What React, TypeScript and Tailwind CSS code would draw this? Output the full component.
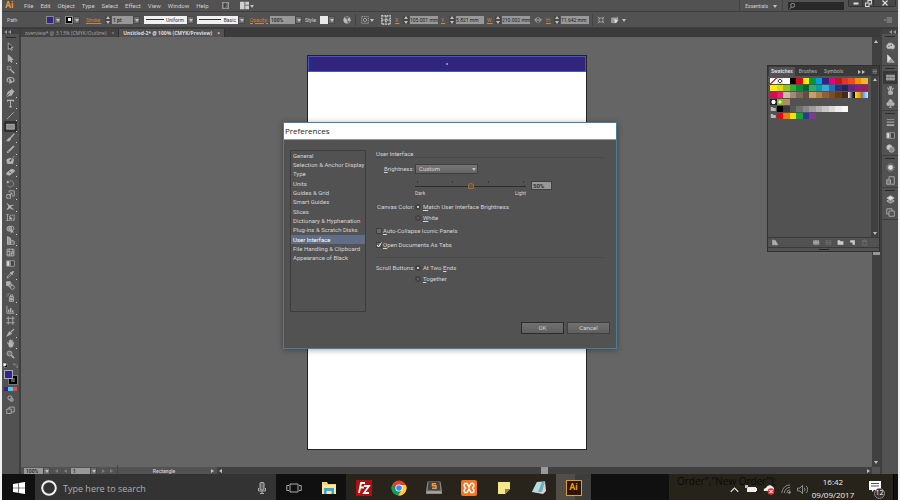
import React, { type ReactNode } from 'react';

const UI = "font-['Roboto','Liberation_Sans',sans-serif]";
const SEGOE = "font-['Open_Sans','Noto_Sans',sans-serif]";

function Icon({ children, className = 'size-[9px]' }: { children: ReactNode; className?: string }) {
  return (
    <svg viewBox="0 0 12 12" className={`shrink-0 ${className}`} fill="none" stroke="#b4b4b4" strokeWidth="1.1" aria-hidden="true">
      {children}
    </svg>
  );
}

const F = '#b4b4b4';

const selection = <path d="M3 1v9l2.3-2 1.6 3.2 1.3-.7L6.700 7.500H9.500z" fill="#2b2b2b" />;
const direct = <path d="M3 1v9l2.3-2 1.600 3.200 1.300-.7L6.700 7.500H9.500z" fill={F} />;
const wand = <><path d="M5.500 5.500L11 11" strokeWidth="1.800" /><path d="M4 .8v2M4 5.500v2M.8 4h2M5.500 4h2M1.700 1.700l1.200 1.200M6.300 1.700L5.200 2.800M1.700 6.300l1.200-1.200" /></>;
const lasso = <><path d="M3.500 8C0 7 .8 2 6 2s6.300 4.500 2.500 6" strokeWidth="1.500" /><path d="M5 3.500V10l1.500-1.500 1.500.3z" fill={F} /></>;
const pen = <><path d="M1 11l2-6 4-2 2.500 2.500-2 4z" fill={F} /><path d="M7 1.500L10.800 5.300" strokeWidth="1.800" /><path d="M1 11l4-4" stroke="#444" /></>;
const typeTool = <path d="M2 3.800V1.800h8v2M6 1.800v8.700M4.200 10.500h3.600" strokeWidth="1.400" />;
const line = <path d="M1.500 10.500l9-9" />;
const rect = <rect x="1" y="3" width="10" height="6.500" fill="#8c8c8c" />;
const brush = <><path d="M11 1L5.500 7" strokeWidth="1.600" /><path d="M5.800 6.500C3 6 3 9.500.8 10c2.200 1.300 6 .6 5-3.500z" fill={F} /></>;
const pencil = <><path d="M10.500 1.500L3.500 8.500" strokeWidth="2.400" /><path d="M1 11l1-3.500L4.500 10z" fill={F} stroke="none" /></>;
const blob = <><path d="M1 5l4-2 5 1-1 6H2z" fill={F} /><path d="M10.500 1L5 7" stroke="#444" strokeWidth="1.600" /><path d="M11.300 0L7 5" /></>;
const eraser = <><path d="M1 8l6-5 4 1v2L5 11l-4-1z" fill={F} /><path d="M4 6l3 2" stroke="#555" /></>;
const rotate = <><path d="M3 3.500a4.200 4.200 0 1 1-1 4.500" strokeDasharray="1.800 .8" /><path d="M1 2v4l4-1.800z" fill={F} stroke="none" /></>;
const scale = <><path d="M1 6h5v5H1zM4 3.500V1h7v7H8" /><path d="M4 8l4-4M5.500 4H8v2.500" /></>;
const width = <><path d="M1 2c3 1 3 6 9 8M1 10c3-1 5-6 9-6" strokeWidth="1.500" /><path d="M3 4.500h4v4H3z" fill={F} stroke="none" /></>;
const free = <><path d="M2 2v8M.5 2h3M.5 10h3" /><path d="M5 3h6v6.500H5z" strokeDasharray="1.500 1" strokeWidth="1.500" /><path d="M5 5l4 2-4 2z" fill={F} stroke="none" /></>;
const shape = <><circle cx="4.500" cy="5" r="3.300" fill="#888" /><circle cx="7.500" cy="4.500" r="3" /><path d="M6 5l5 5-3-.4L6.500 12z" fill={F} stroke="none" /></>;
const perspective = <><path d="M2 1v10M2 1l4 2v8M6 5l5 2v4H2M2 5h4M2 8h8" /><path d="M2 1l4 2v8H2z" fill="#999" /></>;
const mesh = <><path d="M1.500 1.500h9v9h-9z" /><path d="M1 5c3-2 6 2 10 0M1 8c4 2 6-2 10 0M4.500 1c-2 4 2 6 0 10M8 1c2 4-2 6 0 10" /></>;
const gradient = <><path d="M1 2.500h10v7H1z" /><path d="M6 3h4.500v6H6z" fill="#444" stroke="none" /><path d="M1.500 3h3v6h-3z" fill="#ddd" stroke="none" /><path d="M4.500 3h2v6h-2z" fill="#999" stroke="none" /></>;
const dropper = <><path d="M1.200 10.800l1-2.500 4-4 1.500 1.500-4 4z" /><path d="M6 3l3 3M7.500 4.500l2.500-2.800" strokeWidth="2.200" /></>;
const blend = <><rect x=".8" y="1" width="5" height="5" fill={F} /><circle cx="6" cy="6" r="2.500" fill="#888" /><circle cx="8.500" cy="8.500" r="2.600" fill="#515151" /></>;
const spray = <><path d="M4.500 5h5.500v6.500H4.500zM6 2.500h3V5H6z" /><path d="M6 7h2.500v2.500H6z" fill={F} /><path d="M1 1.500h1M3 2.500h1M1 4h1M3.500 .8h1" /></>;
const graph = <><path d="M1.200 1v10h10" /><path d="M3.700 10V6M6.300 10V4M9 10V7" strokeWidth="1.800" /></>;
const artboard = <path d="M3 .5v11M9 .5v11M.5 3h11M.5 9h11" />;
const slice = <><path d="M10.500 1.500L6 6" strokeWidth="1.500" /><path d="M1 11l3.500-6 3 2.500z" fill={F} /></>;
const hand = <path d="M3 7L1.500 5l1-.5L4 6V2h1.200v3L5.600 1h1.200l.2 4 .6-3.500h1.200L8.500 6l1-2h1L9.500 9 8 11H4.500z" fill={F} strokeWidth=".5" />;
const zoom = <><circle cx="4.700" cy="4.700" r="3.300" fill="#777" /><path d="M7.200 7.200L11 11" strokeWidth="2" /></>;

const toolGroups: [string, ReactNode][][] = [
  [['Selection', selection]],
  [['Direct Selection', direct], ['Magic Wand', wand], ['Lasso', lasso]],
  [['Pen', pen], ['Type', typeTool]],
  [['Line Segment', line], ['Rectangle', rect], ['Paintbrush', brush]],
  [['Pencil', pencil], ['Blob Brush', blob], ['Eraser', eraser]],
  [['Rotate', rotate], ['Scale', scale]],
  [['Width', width], ['Free Transform', free]],
  [['Shape Builder', shape], ['Perspective Grid', perspective]],
  [['Mesh', mesh], ['Gradient', gradient], ['Eyedropper', dropper], ['Blend', blend]],
  [['Symbol Sprayer', spray]],
  [['Column Graph', graph], ['Artboard', artboard]],
  [['Slice', slice], ['Hand', hand], ['Zoom', zoom]],
];
const plainTools = ['Selection', 'Magic Wand', 'Lasso', 'Mesh', 'Gradient', 'Blend', 'Artboard', 'Zoom', 'Free Transform'];

function Arrow({ dir = 'down', className = '' }: { dir?: 'up' | 'down' | 'left' | 'right'; className?: string }) {
  const d = { up: 'M0 3h4L2 0z', down: 'M0 1h4L2 4z', left: 'M3 0v4L0 2z', right: 'M1 0v4l3-2z' }[dir];
  return <svg viewBox="0 0 4 4" className={`size-1 shrink-0 ${className}`} fill="#c0c0c0" aria-hidden="true"><path d={d} /></svg>;
}

function Drop({ label }: { label: string }) {
  return (
    <button aria-label={label} className="flex h-2 w-[7px] shrink-0 items-center justify-center border border-[#484848] bg-[#6c6c6c]">
      <Arrow />
    </button>
  );
}

function Spinner() {
  return (
    <span className="flex h-2 w-[6px] shrink-0 flex-col items-center justify-between bg-[#464646]">
      <Arrow dir="up" /><Arrow />
    </span>
  );
}

function Measure({ label, value }: { label: string; value: string }) {
  return (
    <label className="flex shrink-0 items-center gap-px">
      <span className="w-[7px] text-[#c98644] underline">{label}</span>
      <Spinner />
      <input defaultValue={value} className="h-2 w-[28px] bg-[#989898] text-[5px] leading-[8px] text-[#202020]" />
    </label>
  );
}

const Sep = () => <span className="h-3 w-px shrink-0 bg-[#434343]" />;

function MenuBar() {
  return (
    <header className="flex h-3 shrink-0 items-center border-b border-[#3e3e3e] bg-[#525252] text-[6px] leading-[8px] text-[#d0d0d0]">
      <span className="w-[22px] pl-[3px] text-[9px] leading-[9px] font-bold text-[#e69a3c]">Ai</span>
      <nav className="flex gap-[7px]">
        {['File', 'Edit', 'Object', 'Type', 'Select', 'Effect', 'View', 'Window', 'Help'].map((m) => <button key={m}>{m}</button>)}
      </nav>
      <Icon className="ml-[13px] size-[7px]"><rect x=".5" y=".5" width="11" height="11" fill="#777" stroke="#aaa" /><path d="M4 10V3h3v3H4l4 4" stroke="#333" strokeWidth="1.500" /></Icon>
      <Icon className="ml-[11px] size-[9px]"><path d="M0 1h6v10H0zM7 1h5v4H7zM7 6h5v5H7z" fill="#d0d0d0" stroke="none" /></Icon>
      <Arrow className="ml-px" />
      <span className="flex-1" />
      <Sep />
      <button className="flex items-center gap-[5px] px-[5px] text-[5px]">Essentials <Arrow /></button>
      <Sep />
      <label className="ml-[5px] flex h-2 w-14 items-center bg-[#282828]">
        <Icon className="size-2"><circle cx="7" cy="5" r="3" /><path d="M5 7.500L2 11" /></Icon>
        <input aria-label="Search" className="min-w-0 flex-1 bg-transparent outline-none" />
      </label>
      <div className="mr-[2px] ml-1 flex h-[7px] w-12 self-start rounded-b-[2px] border border-t-0 border-[#333] bg-[#474747]">
        <button aria-label="Minimize" className="flex w-[13px] items-center justify-center"><Icon className="size-[6px]"><path d="M1 7h10" stroke="#ddd" strokeWidth="4" /></Icon></button>
        <button aria-label="Restore" className="flex w-3 items-center justify-center border-x border-[#333]"><Icon className="size-[7px]"><path d="M1 5h6v6H1zM5 4V1h6v6H8" stroke="#ddd" strokeWidth="1.800" /></Icon></button>
        <button aria-label="Close" className="flex flex-1 items-center justify-center"><Icon className="size-[6px]"><path d="M1 1l10 10M11 1L1 11" stroke="#ddd" strokeWidth="2.500" /></Icon></button>
      </div>
    </header>
  );
}

function ControlBar() {
  return (
    <div className="flex h-4 shrink-0 items-center border-b border-[#3e3e3e] bg-[#525252] pl-[5px] text-[5px] leading-[8px] text-[#d0d0d0]">
      <span className="w-[39px]">Path</span>
      <span className="size-2 shrink-0 border border-[#888] bg-[#32258c]" /><Drop label="Fill" />
      <span className="ml-1 flex size-2 shrink-0 items-center justify-center border border-[#888] bg-black"><span className="size-[3px] bg-white" /></span><Drop label="Stroke colour" />
      <label className="ml-[6px] flex items-center">
        <span className="w-[19px] text-[#c98644] underline">Stroke:</span><Spinner />
        <input defaultValue="1 pt" className="ml-px h-2 w-[21px] bg-[#989898] px-px font-medium text-[#202020]" />
      </label>
      <Drop label="Stroke weight" />
      <button className="ml-1 flex h-2 w-[43px] items-center gap-[2px] bg-[#f0f0f0] px-[2px] text-[#333]"><span className="h-px w-[18px] bg-[#333]" />Uniform</button><Drop label="Width profile" />
      <button className="ml-[3px] flex h-2 w-[41px] items-center justify-between bg-[#f0f0f0] px-[2px] text-[#333]"><span className="h-px w-[22px] bg-[#333]" />Basic</button><Drop label="Brush" />
      <label className="ml-[5px] flex items-center">
        <span className="w-5 text-[#c98644] underline">Opacity:</span>
        <input defaultValue="100%" className="h-2 w-[25px] bg-[#989898] px-px font-medium text-[#202020]" />
      </label>
      <Drop label="Opacity presets" />
      <span className="ml-[3px] w-[15px]">Style:</span>
      <span className="size-2 shrink-0 bg-[#e8e8e8]" /><Drop label="Graphic style" />
      <span className="ml-1"><Sep /></span>
      <Icon className="mx-1 size-2"><circle cx="6" cy="6" r="5" fill="#bbb" /><path d="M6 6L2 1h8zM6 6l5 3-4 2z" fill="#666" stroke="none" /></Icon>
      <Sep />
      <Icon className="ml-[5px] size-2"><path d="M1 1h10v10H1z" strokeDasharray="2 1" /><circle cx="6" cy="6" r="2.500" /></Icon><Arrow className="ml-px" />
      <Icon className="mr-1 ml-[7px] size-[10px]"><path d="M1 1h10v10H1zM6 1v10M1 6h10" strokeDasharray="2 1" strokeWidth="2" stroke="#bbb" /></Icon>
      <div className="flex items-center gap-[3px]">
        <Measure label="X:" value="105.001 mm" />
        <Measure label="Y:" value="5.821 mm" />
        <Measure label="W:" value="210.002 mm" />
        <Icon className="mx-px size-2"><path d="M5 2L1 6l4 4M7 2l4 4-4 4M2 6h8" strokeWidth="1.400" /></Icon>
        <Measure label="H:" value="11.642 mm" />
        <Sep />
        <Icon className="ml-px size-2"><path d="M3 3h6v6H3zM1 1l3 3M11 1L8 4M1 11l3-3M11 11L8 8" /></Icon>
      </div>
      <Icon className="ml-[6px] size-2"><path d="M1 3h7v7H1zM9 1v5l2-1" fill="#999" /><path d="M5 4l6 3-5 4z" fill="#ddd" stroke="none" /></Icon>
      <Arrow className="ml-[3px]" />
      <span className="flex-1" />
      <Icon className="mr-[6px] size-2"><path d="M4 3h8M4 6h8M4 9h8M0 6h3" /></Icon>
    </div>
  );
}

const Grip = () => <span className="h-px w-[10px] bg-[#2b2b2b]" />;

function Toolbar() {
  return (
    <aside className="flex w-[19px] shrink-0 flex-col items-center border-r-2 border-[#3e3e3e] bg-[#525252]">
      <div className="flex h-[5px] w-full items-center bg-[#383838] pl-[2px] opacity-60"><Arrow dir="left" /><Arrow dir="left" /></div>
      <div className="flex h-[7px] items-center"><Grip /></div>
      <div className="flex flex-col gap-px">
        {toolGroups.map((group, g) => (
          <div key={g} className="flex flex-col">
            {group.map(([name, art]) => (
              <button key={name} aria-label={name} className={`relative flex h-[11px] w-[13px] items-center justify-center ${name === 'Rectangle' ? 'rounded-[1px] bg-[#303030]' : ''}`}>
                <Icon className="size-[9px]">{art}</Icon>
                {!plainTools.includes(name) && <span className="absolute right-0 bottom-0 size-px bg-[#ccc]" />}
              </button>
            ))}
          </div>
        ))}
      </div>
      <div className="mt-px flex h-2 w-[15px] items-center justify-between">
        <Icon className="size-[5px]"><rect x="4" y="4" width="7" height="7" fill="#000" /><rect x="1" y="1" width="6" height="6" fill="#fff" /></Icon>
        <Icon className="size-[5px]"><path d="M1 3h6l3 3v5M4 0L1 3l3 3M7 8l3 3 2-3" /></Icon>
      </div>
      <div className="relative h-4 w-[13px]">
        <span className="absolute right-0 bottom-px size-2 border-2 border-black outline outline-[#777]" />
        <span className="absolute top-px left-0 size-[9px] border border-[#aaa] bg-[#32258c]" />
      </div>
      <div className="mt-[2px] flex h-1 w-[13px]"><span className="w-1 bg-[#32258c]" /><span className="w-[5px] bg-[#5cc0e8]" /><span className="w-1 bg-[#e04a4a]" /></div>
      <Icon className="mt-1 size-[7px]"><circle cx="5" cy="5" r="3.500" strokeWidth="1.600" /><circle cx="8" cy="8" r="3" fill="#888" /></Icon>
      <Icon className="mt-1 size-[9px]"><path d="M1 4h6v6H1zM4 4V1.500h7v6.500H7" /></Icon>
    </aside>
  );
}

const dockGroups: { name: string; art: ReactNode }[][] = [
  [
    { name: 'Color', art: <><path d="M1 8c0-4 3-6 6-5s5 3 4 6-3 1-5 1-5 1-5-2z" fill="#c4c4c4" /><circle cx="4" cy="7" r="1" fill="#555" stroke="none" /><circle cx="7" cy="5.500" r="1" fill="#555" stroke="none" /></> },
    { name: 'Color Guide', art: <><path d="M2 1v10h9z" fill="#999" /><path d="M2 1l5 5-5 5z" fill="#ddd" stroke="none" /></> },
  ],
  [
    { name: 'Swatches', art: <path d="M.5 2.500h3v3h-3zM4.500 2.500h3v3h-3zM8.500 2.500h3v3h-3zM.5 6.500h3v3h-3zM4.500 6.500h3v3h-3zM8.500 6.500h3v3h-3z" fill="#999" stroke="#bbb" strokeWidth=".6" /> },
    { name: 'Brushes', art: <><path d="M3.500 7h5v4h-5z" fill={F} /><path d="M6 7V2M4.500 6L2 2M7.500 6L10 2.500M5 1h2v2H5z" strokeWidth="1.500" /></> },
    { name: 'Symbols', art: <><circle cx="6" cy="3" r="2.200" fill={F} /><circle cx="3.200" cy="6.700" r="2.200" fill={F} /><circle cx="8.800" cy="6.700" r="2.200" fill={F} /><path d="M6 5v6M4 11h4" /></> },
  ],
  [
    { name: 'Stroke', art: <><path d="M1 2h10" strokeWidth=".8" /><path d="M1 5.500h10" strokeWidth="1.300" /><path d="M1 9.500h10" strokeWidth="2" /></> },
    { name: 'Gradient', art: gradient },
    { name: 'Transparency', art: <><circle cx="4.500" cy="4.500" r="3.500" fill="#ccc" /><circle cx="7.500" cy="7.500" r="3.500" fill="#888" /></> },
  ],
  [
    { name: 'Appearance', art: <><circle cx="6" cy="6" r="3.200" fill="#ddd" /><circle cx="6" cy="6" r="5" strokeDasharray="1 1" /></> },
    { name: 'Graphic Styles', art: <><path d="M4 4V1h7v10H7" /><path d="M1 5h5v6H1z" fill="#777" /></> },
  ],
  [
    { name: 'Layers', art: <><path d="M6 5l5 3-5 3-5-3z" fill="#888" /><path d="M6 1l5 3-5 3-5-3z" fill="#ddd" /></> },
    { name: 'Artboards', art: <path d="M4 4h7v7H4zM4 8H1V1h7v3" /> },
  ],
];

function Dock() {
  return (
    <aside className="w-[18px] shrink-0 border-l-2 border-[#3e3e3e] bg-[#525252]">
      <div className="flex h-[5px] items-center justify-end bg-[#383838] pr-px opacity-60"><Arrow dir="left" /><Arrow dir="left" /></div>
      {dockGroups.map((group, i) => (
        <div key={i} className="flex flex-col items-center border-b border-[#3e3e3e]">
          <div className="flex h-[5px] items-center"><Grip /></div>
          {group.map(({ name, art }) => (
            <button key={name} aria-label={name} className={`flex h-[13px] w-[14px] items-center justify-center ${name === 'Swatches' ? 'rounded-[1px] bg-[#383838]' : ''}`}>
              <Icon className="size-[9px]">{art}</Icon>
            </button>
          ))}
        </div>
      ))}
    </aside>
  );
}

const swatchRows: string[][] = [
  ['none', 'reg', '#ffffff', '#000000', '#e30613', '#ffed00', '#009640', '#009fe3', '#312783', '#e6007e', '#be1622', '#e6332a', '#e94e1b', '#f39200', '#f9b233'],
  ['#fcea10', '#dedc00', '#95c11f', '#3aaa35', '#008d36', '#006633', '#2fac66', '#00a19a', '#36a9e1', '#1d71b8', '#2d2e83', '#29235c', '#662483', '#951b81', '#a3195b'],
  ['#d60b52', '#e71d73', '#cbbba0', '#a48a7b', '#7b6a58', '#634e42', '#ca9e67', '#b17f4a', '#936037', '#7d4e24', '#683c11', '#432918', 'grad1', 'grad2', 'grad3'],
  ['dot', 'leaf', '#b08a6a'],
  ['folder', '#000000', '#3a3a3a', '#575757', '#707070', '#878787', '#9d9d9d', '#b2b2b2', '#c6c6c6', '#dadada', '#ededed', '#f8f8f8'],
  ['folder', '#e30613', '#f07d00', '#ffdd00', '#13a538', '#283a97', '#82368c'],
];

function Folder() {
  return <svg viewBox="0 0 12 12" className="size-full" fill="#b8b8b8" aria-hidden="true"><path d="M1 2h4l1 2h5v6H1z" /></svg>;
}

function Swatch({ c }: { c: string }) {
  if (c === 'folder') return <Folder />;
  const special: Record<string, string> = {
    none: 'bg-[linear-gradient(135deg,#fff_42%,#e33_42%,#e33_58%,#fff_58%)]',
    reg: 'bg-[radial-gradient(circle,#fff_20%,#444_25%,#444_45%,#ddd_50%)]',
    grad1: 'bg-linear-to-r from-white to-black',
    grad2: 'bg-linear-to-r from-[#ffe400] to-[#ef7d00]',
    grad3: 'bg-linear-to-r from-[#2b7fc4] to-[#cfe6f6]',
    dot: 'bg-[radial-gradient(circle,#fff_40%,#222_50%)]',
    leaf: 'bg-[radial-gradient(circle,#eaf3a0_25%,#8ab52a_50%)]',
  };
  return special[c] ? <span className={special[c]} /> : <span style={{ backgroundColor: c }} />;
}

function SwatchesPanel() {
  return (
    <section className="absolute top-[65px] right-[20px] flex h-[187px] w-[113px] flex-col border border-[#303030] bg-[#525252]">
      <div className="flex h-[10px] shrink-0 items-center bg-[#3a3a3a] pt-px pl-px text-[5px] leading-[9px] text-[#a0a0a0]">
        <button className="h-full bg-[#525252] px-[2px] font-bold text-[#dcdcdc]">Swatches</button>
        <button className="px-1 font-medium">Brushes</button>
        <button className="px-[3px] font-medium">Symbols</button>
        <span className="flex-1" />
        <Arrow dir="right" /><Arrow dir="right" className="mr-[6px]" />
        <Icon className="mr-[2px] size-[6px]"><path d="M3 2h9M3 5h9M3 8h9" /></Icon>
      </div>
      <div className="flex min-h-0 flex-1">
        <div className="flex flex-1 flex-col gap-px pt-[2px] pl-[2px]">
          {swatchRows.map((row, i) => (
            <div key={i} className="grid h-[6px] w-[98px] grid-cols-15">
              {row.map((c, j) => <Swatch key={j} c={c} />)}
            </div>
          ))}
        </div>
        <div className="mr-px flex w-[7px] flex-col items-center justify-between bg-[#404040] py-[2px]"><Arrow dir="up" /><Arrow /></div>
      </div>
      <div className="flex h-[10px] shrink-0 items-center justify-between border-t border-[#3a3a3a] pr-[11px] pl-1">
        <Icon className="size-[7px]"><path d="M1 2h3v8H1zM5 2l5 8H5z" fill={F} /></Icon>
        <span className="flex gap-[5px]">
          <Icon className="size-[7px]"><path d="M1 3h9v6H1zM1 6h9M5 3v6" fill="#888" /></Icon>
          <Icon className="size-[7px]"><path d="M2 3h8v6H2zM2 6h8" stroke="#777" /></Icon>
          <Icon className="size-[7px]"><path d="M1 2h4l1 2h5v6H1z" fill="#ccc" stroke="none" /></Icon>
          <Icon className="size-[7px]"><path d="M2 2h8v8H6V6H2z" fill="#ccc" stroke="none" /></Icon>
          <Icon className="size-[7px]"><path d="M3 4h6v7H3zM2 3h8M5 1h2" stroke="#777" /></Icon>
        </span>
      </div>
      <div className="flex h-1 shrink-0 items-center justify-center border-t border-[#3a3a3a]"><Grip /></div>
    </section>
  );
}

function Workspace() {
  return (
    <main className="flex min-w-0 flex-1 flex-col">
      <div className={`flex h-2 shrink-0 items-stretch bg-[#3b3b3b] text-[5px] leading-[8px] ${SEGOE}`}>
        <div className="flex items-center gap-[5px] border-r border-[#303030] bg-[#434343] px-1 text-[#a8a8a8]"><span>overview* @ 3.13% (CMYK/Outline)</span><button aria-label="Close overview">×</button></div>
        <div className="flex items-center gap-[5px] border-r border-[#303030] bg-[#525252] px-1 font-bold text-[#dcdcdc]"><span>Untitled-2* @ 100% (CMYK/Preview)</span><button aria-label="Close Untitled-2">×</button></div>
      </div>
      <div className="flex min-h-0 flex-1">
        <div className="flex min-w-0 flex-1 justify-center overflow-hidden bg-[#656565] pt-[18px]">
          <div className="h-[395px] w-[280px] border border-[#222] bg-white">
            <div className="flex h-4 items-center justify-center border border-[#4058c0] bg-[#32257e]"><span className="size-[2px] bg-[#6d86e6]" /></div>
          </div>
        </div>
        <div className="flex w-2 flex-col items-center bg-[#404040] py-[3px]">
          <Arrow dir="up" /><span className="mt-[207px] h-1 w-[7px] bg-[#989898]" /><span className="flex-1" /><Arrow />
        </div>
      </div>
      <div className="flex h-[7px] shrink-0 items-center bg-[#525252] pl-[3px] text-[5px] leading-[6px] text-[#d0d0d0]">
        <input aria-label="Zoom level" defaultValue="100%" className="h-[6px] w-[19px] bg-[#989898] px-[2px] font-medium text-[#202020]" /><Drop label="Zoom presets" />
        <Arrow dir="left" className="ml-[5px] opacity-40" /><Arrow dir="left" className="ml-[5px] opacity-40" />
        <input aria-label="Artboard" defaultValue="1" className="ml-[3px] h-[6px] w-[19px] bg-[#989898] px-[2px] font-medium text-[#202020]" /><Drop label="Artboards" />
        <Arrow dir="right" className="ml-1 opacity-40" /><Arrow dir="right" className="mx-1 opacity-40" />
        <Sep />
        <span className="w-[92px] text-center font-medium">Rectangle</span>
        <Arrow dir="right" className="mr-[3px]" />
        <div className="flex h-full flex-1 items-center bg-[#404040] px-[2px]">
          <Arrow dir="left" /><span className="flex-1" /><span className="h-[7px] w-[7px] bg-[#989898]" /><span className="flex-1" /><Arrow dir="right" />
        </div>
        <span className="w-2" />
      </div>
    </main>
  );
}

const sections = ['General', 'Selection & Anchor Display', 'Type', 'Units', 'Guides & Grid', 'Smart Guides', 'Slices', 'Dictionary & Hyphenation', 'Plug-ins & Scratch Disks', 'User Interface', 'File Handling & Clipboard', 'Appearance of Black'];

function Radio({ name, checked, children }: { name: string; checked?: boolean; children: ReactNode }) {
  return (
    <label className="flex h-[11px] items-center gap-[2px]">
      <input type="radio" name={name} defaultChecked={checked} className="size-[6px] appearance-none rounded-full border-2 border-[#444] bg-[#686868] checked:bg-[#eee]" />
      <span>{children}</span>
    </label>
  );
}

function RadioRow({ title, children }: { title: string; children: ReactNode }) {
  return (
    <div role="radiogroup" aria-label={title.replace(':', '')} className="flex gap-px">
      <span className="w-[38px] text-right leading-[11px] whitespace-nowrap">{title}</span>
      <div>{children}</div>
    </div>
  );
}

function Check({ checked, children }: { checked?: boolean; children: ReactNode }) {
  return (
    <label className="flex h-[14px] items-center gap-px">
      <span className="relative flex size-[6px]">
        <input type="checkbox" defaultChecked={checked} className="size-[6px] appearance-none border border-[#404040] bg-[#686868]" />
        {checked && <svg viewBox="0 0 6 6" className="pointer-events-none absolute inset-0" fill="none" stroke="#eee" aria-hidden="true"><path d="M1 3l1.500 2L5.500 .5" /></svg>}
      </span>
      <span>{children}</span>
    </label>
  );
}

function Preferences() {
  return (
    <section role="dialog" aria-label="Preferences" className="absolute top-[122px] left-1/2 flex h-[227px] w-[334px] -translate-x-1/2 flex-col border border-[#4a7d9c] bg-[#525252] text-[6px] leading-[8px] text-[#d4d4d4] shadow-[0_1px_6px_rgba(0,0,0,0.35)]">
      <h1 className={`flex h-[17px] shrink-0 items-center border-b border-[#999] bg-white pl-px text-[8px] text-[#222] ${SEGOE}`}>Preferences</h1>
      <div className="flex flex-1 gap-[10px] pt-[10px] pr-3 pl-[6px]">
        <div className="h-[162px] w-[76px] shrink-0 rounded-[1px] border border-[#3c3c3c]">
          <div className="grid h-28 grid-rows-12">
            {sections.map((s) => <button key={s} className={`flex items-center pl-[2px] text-left whitespace-nowrap ${s === 'User Interface' ? 'bg-[#5f6e86] text-white' : ''}`}>{s}</button>)}
          </div>
        </div>
        <div className="min-w-0 flex-1">
          <h2 className="border-b border-[#4a4a4a] leading-[7px]">User Interface</h2>
          <div className="mt-[6px] flex items-center gap-px">
            <label htmlFor="brightness" className="w-[38px] text-right"><u>B</u>rightness:</label>
            <span className="relative flex items-center">
              <select id="brightness" className="h-[10px] w-[63px] appearance-none border border-[#404040] bg-linear-to-b from-[#767676] to-[#646464] px-[3px]"><option>Custom</option></select>
              <Arrow className="pointer-events-none absolute right-[2px]" />
            </span>
          </div>
          <div className="mt-[7px] ml-[39px] flex gap-[5px]">
            <div className="w-[111px]">
              <div className="flex h-[2px] justify-between px-[2px]">{[0, 1, 2, 3].map((t) => <span key={t} className="w-px bg-[#3a3a3a]" />)}</div>
              <input type="range" aria-label="Brightness level" defaultValue={50} className="block h-[6px] w-full appearance-none bg-[linear-gradient(#2c2c2c,#2c2c2c)] bg-size-[100%_1px] bg-center bg-no-repeat [&::-webkit-slider-thumb]:h-[6px] [&::-webkit-slider-thumb]:w-[6px] [&::-webkit-slider-thumb]:appearance-none [&::-webkit-slider-thumb]:rounded-t-full [&::-webkit-slider-thumb]:border [&::-webkit-slider-thumb]:border-[#a5702f] [&::-webkit-slider-thumb]:bg-[#5f564a]" />
              <div className="flex justify-between text-[5px] leading-[8px]"><span>Dark</span><span>Light</span></div>
            </div>
            <input aria-label="Brightness value" defaultValue="50%" className="h-[9px] w-[21px] border border-[#404040] bg-[#989898] px-px font-medium text-[#202020]" />
          </div>
          <div className="mt-1">
            <RadioRow title="Canvas Color:"><Radio name="canvas" checked><u>M</u>atch User Interface Brightness</Radio><Radio name="canvas"><u>W</u>hite</Radio></RadioRow>
          </div>
          <div className="mt-px"><Check><u>A</u>uto-Collapse Iconic Panels</Check><Check checked><u>O</u>pen Documents As Tabs</Check></div>
          <div className="mt-[5px] border-t border-[#4a4a4a] pt-1">
            <RadioRow title="Scroll Buttons:"><Radio name="scroll" checked>At Two <u>E</u>nds</Radio><Radio name="scroll"><u>T</u>ogether</Radio></RadioRow>
          </div>
        </div>
      </div>
      <div className="mr-[6px] mb-[14px] flex h-3 justify-end gap-[3px]">
        <button className="w-[43px] border border-[#2c2c2c] bg-linear-to-b from-[#707070] to-[#606060]">OK</button>
        <button className="w-[43px] border border-[#404040] bg-linear-to-b from-[#707070] to-[#606060]">Cancel</button>
      </div>
    </section>
  );
}

function TaskIcon({ label, children }: { label: string; children: ReactNode }) {
  return (
    <button aria-label={label} className="flex w-[35px] shrink-0 items-center justify-center">
      <svg viewBox="0 0 16 16" className="mt-px size-4" aria-hidden="true">{children}</svg>
    </button>
  );
}

function Taskbar() {
  return (
    <footer className={`flex h-[26px] shrink-0 bg-[#101010] text-white ${SEGOE}`}>
      <button aria-label="Start" className="flex w-[33px] shrink-0 items-center justify-center">
        <svg viewBox="0 0 12 12" className="mt-px size-3" fill="#fff" aria-hidden="true"><path d="M0 2l5-.8v4.500H0zM5.600 1.100L12 0v5.700H5.600zM0 6.300h5v4.500L0 10zM5.600 6.300H12V12l-6.400-1.100z" /></svg>
      </button>
      <label className="flex w-[241px] shrink-0 items-center bg-[#333] px-[6px]">
        <svg viewBox="0 0 16 16" className="mt-[2px] size-4 shrink-0" fill="none" stroke="#f2f2f2" strokeWidth="2" aria-hidden="true"><circle cx="8" cy="8" r="6.800" /></svg>
        <input aria-label="Search" placeholder="Type here to search" className="mt-[3px] ml-[6px] h-4 min-w-0 flex-1 bg-transparent text-[9px] outline-none placeholder:text-[#aeaeae]" />
        <svg viewBox="0 0 12 12" className="mt-[2px] mr-[2px] size-3 shrink-0" fill="none" stroke="#b0b0b0" aria-hidden="true"><rect x="4" y=".5" width="4" height="7.500" rx="1" fill="#666" /><path d="M2.500 6v3h7V6M6 9v2.500M4 11.500h4" /></svg>
      </label>
      <TaskIcon label="Task View"><path d="M4 4h8v8H4zM3 5.500H.8v5H3M13 5.500h2.200v5H13" fill="none" stroke="#aaa" /></TaskIcon>
      <TaskIcon label="File Explorer"><path d="M1 2h5l1 2h8v10H1z" fill="#f5d475" /><path d="M1 5h14v9H1z" fill="#fde79a" /><path d="M3 14V8h10v6h-2.500v-3h-5v3z" fill="#38a8dc" /></TaskIcon>
      <div className="flex bg-[#28241b]">
        <TaskIcon label="FileZilla"><rect width="16" height="16" fill="#b01010" /><path d="M3 13L5 3h4M4 7.500h4M8 6h5L8 13h5" fill="none" stroke="#fff" strokeWidth="1.800" /></TaskIcon>
        <TaskIcon label="Chrome"><circle cx="8" cy="8" r="7.500" fill="#db4437" /><path d="M1.500 4.300A7.500 7.500 0 0 0 7.200 15.500L10.600 9.500H8L4.800 9.300z" fill="#0f9d58" /><path d="M7.200 15.500A7.500 7.500 0 0 0 14.900 5H8l3.200 4z" fill="#ffcd40" /><circle cx="8" cy="8" r="3.600" fill="#fff" /><circle cx="8" cy="8" r="2.800" fill="#4285f4" /></TaskIcon>
        <TaskIcon label="Sublime Text"><path d="M1.500 1.500h13L16 11v3H0v-3z" fill="#888" /><path d="M2.500 2h11l1 8.500h-13z" fill="#424242" /><path d="M1 11.500h14v1.500H1z" fill="#aaa" /><path d="M10 3.800H6.500v2H10v2.400H6" fill="none" stroke="#f09a3c" strokeWidth="1.500" /></TaskIcon>
        <TaskIcon label="XAMPP"><rect width="16" height="16" rx="2" fill="#f37623" /><path d="M4 3.500h2L8 7l2-3.500h2c1.500 1 1 3-.5 4.500 1.500 1.500 2 3.500.5 4.500h-2L8 9l-2 3.500H4c-1.500-1-1-3 .5-4.500C3 6.500 2.500 4.500 4 3.500z" fill="none" stroke="#fff" strokeWidth="1.500" /></TaskIcon>
        <TaskIcon label="Sticky Notes"><path d="M2 2h12v7l-5 5H2z" fill="#f4e48a" /><path d="M14 9l-5 5V9z" fill="#8e8245" /></TaskIcon>
        <TaskIcon label="Notepad"><path d="M6 2l8-1-1 11-12 0z" fill="#71aeba" /><path d="M6 2l5 0-4 10-6 0z" fill="#b3dbe2" /><path d="M14 1l1 10-3 3-11-2 10 0z" fill="#d5d5d5" /></TaskIcon>
      </div>
      <button className="flex w-[35px] shrink-0 items-center justify-center bg-linear-to-r from-[#504e47] from-55% to-[#3d3d3c] to-55%">
        <span className={`mt-px flex size-4 items-center justify-center border border-[#e8982e] bg-[#2a1700] text-[9px] font-bold text-[#f09b27] ${UI}`}>Ai</span>
      </button>
      <span className="flex-1" />
      <div className="relative flex w-[225px] shrink-0 items-center justify-end border-r border-black bg-[#26231a]">
        <span className="absolute top-0 left-2 text-[10px] leading-[14px] text-[#0c0b07]">Order","New Order");</span>
        <div className="relative mt-1 flex items-center gap-[6px]">
          <svg viewBox="0 0 12 12" className="size-[9px]" fill="none" stroke="#ddd" strokeWidth="1.500" aria-hidden="true"><path d="M1 9l5-5 5 5" /></svg>
          <svg viewBox="0 0 12 10" className="h-[10px] w-3" aria-hidden="true"><path d="M2 3h9v5H2z" fill="#eee" /><path d="M0 1h3v3H0z" fill="#bbb" /><path d="M11 4h1v3h-1z" fill="#eee" /></svg>
          <svg viewBox="0 0 12 12" className="size-3" aria-hidden="true"><path d="M1 8c-1-2 1-3 2-3 1-3 5-4 7-1 2 1 1 4 0 4z" fill="#eee" /><circle cx="8" cy="8.500" r="3.300" fill="#e23b3b" /><path d="M6.500 7l3 3M9.500 7l-3 3" stroke="#fff" /></svg>
          <svg viewBox="0 0 12 12" className="size-[10px]" fill="none" stroke="#999" aria-hidden="true"><path d="M1 11A10 10 0 0 1 11 1M4 11a7 7 0 0 1 7-7M7 11a4 4 0 0 1 4-4" /><path d="M9 11a2 2 0 0 1 2-2v2z" fill="#999" /></svg>
          <svg viewBox="0 0 12 12" className="size-[11px]" fill="none" stroke="#999" aria-hidden="true"><path d="M.5 4.500H3l3-3v9l-3-3H.5zM8 4a3 3 0 0 1 0 4M10 2a6 6 0 0 1 0 8" /></svg>
        </div>
        <time className="mt-px mr-[10px] w-[50px] shrink-0 text-center text-[8px] leading-[13px] text-[#eee]">16:42<br />09/09/2017</time>
        <button aria-label="12 notifications" className="relative mr-[9px] size-4">
          <svg viewBox="0 0 16 16" className="size-4" aria-hidden="true"><path d="M1 2h12v9H6l-2 2v-2H1z" fill="#fff" /><path d="M3 4.500h8M3 7h8" stroke="#555" /></svg>
          <span className="absolute -right-px -bottom-1 flex size-[11px] items-center justify-center rounded-full border border-[#888] bg-[#333] text-[7px]">12</span>
        </button>
      </div>
      <span className="w-1 shrink-0" />
    </footer>
  );
}

export default function App() {
  return (
    <div className={`relative flex h-screen flex-col overflow-hidden bg-[#f2f2f2] px-[2px] ${UI}`}>
      <MenuBar />
      <ControlBar />
      <div className="flex min-h-0 flex-1 bg-[#3b3b3b] pt-px">
        <Toolbar />
        <Workspace />
        <Dock />
      </div>
      <Taskbar />
      <SwatchesPanel />
      <Preferences />
    </div>
  );
}
